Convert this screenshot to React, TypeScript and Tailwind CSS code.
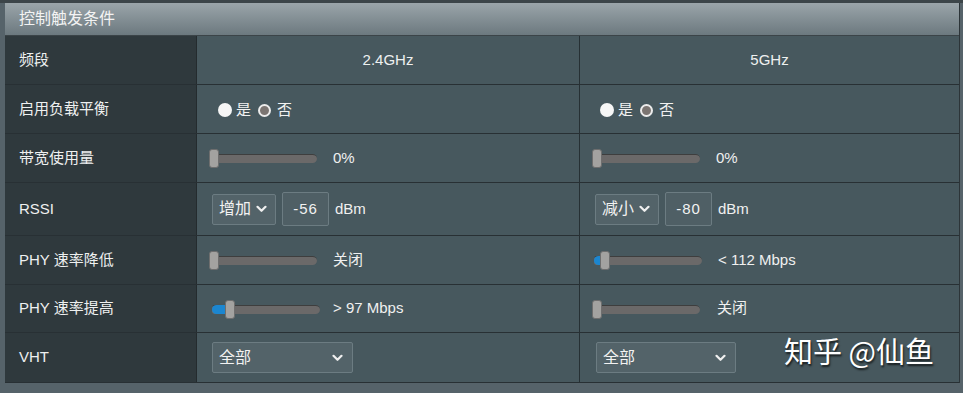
import React from "react";

const FONT = { fontFamily: '"Liberation Sans", Arial, "Noto Sans CJK SC", sans-serif' };

function RadioGroup() {
  return (
    <div className="flex items-center text-[15px] text-[#f2f2f2]">
      <span className="w-[14px] h-[14px] rounded-full bg-[#f6f6f6]" />
      <span className="ml-[4px] mr-[7px]">是</span>
      <span className="w-[13px] h-[13px] rounded-full bg-[#7b7572] border-[2px] border-[#ececec]" />
      <span className="ml-[6px]">否</span>
    </div>
  );
}

function Slider({ fill, thumbAt }: { fill: number; thumbAt: number }) {
  return (
    <div className="relative w-[108px] h-[20px]">
      <div className="absolute left-0 right-0 top-[6px] h-[9px] rounded-r-[5px] rounded-l-[3px] bg-[#6b6969] border-t border-[#3e3e3e]" />
      {fill > 0 && (
        <div
          className="absolute left-0 top-[6px] h-[9px] rounded-l-[5px] bg-[#1b86d0]"
          style={{ width: fill }}
        />
      )}
      <div
        className="absolute top-[1px] w-[10px] h-[19px] rounded-[3px] bg-[#a3a2a0] border border-[#6e6e6e]"
        style={{ left: thumbAt }}
      />
    </div>
  );
}

function Chevron() {
  return (
    <svg width="11" height="8" viewBox="0 0 11 8" className="shrink-0">
      <path d="M1.5 1.8 L5.5 5.8 L9.5 1.8" fill="none" stroke="#f0f0f0" strokeWidth="2.2" strokeLinecap="round" strokeLinejoin="round" />
    </svg>
  );
}

function SmallSelect({ label }: { label: string }) {
  return (
    <div className="flex items-center h-[31px] w-[64px] pl-[6px] pr-[8px] gap-[5px] bg-[#536369] border border-[#6c7c82] rounded-[2px] text-[16px] text-[#f2f2f2]">
      <span>{label}</span>
      <Chevron />
    </div>
  );
}

function NumInput({ value }: { value: string }) {
  return (
    <div className="flex items-center justify-center h-[34px] w-[47px] bg-[#4f5f65] border border-[#6c7c82] rounded-[2px] text-[15px] text-[#f2f2f2] tracking-[1px]">
      {value}
    </div>
  );
}

function WideSelect({ w }: { w: string }) {
  return (
    <div className={`flex items-center justify-between h-[31px] ${w} pl-[6px] pr-[9px] bg-[#536369] border border-[#6c7c82] rounded-[2px] text-[16px] text-[#f2f2f2]`}>
      <span>全部</span>
      <Chevron />
    </div>
  );
}

type Row = { label: string; h: string; a: React.ReactNode; b: React.ReactNode };

export default function App() {
  const rows: Row[] = [
    {
      label: "频段",
      h: "h-[49px]",
      a: <div className="w-full text-center text-[15px] text-[#eef0f0]">2.4GHz</div>,
      b: <div className="w-full text-center text-[15px] text-[#eef0f0]">5GHz</div>,
    },
    {
      label: "启用负载平衡",
      h: "h-[49px]",
      a: <div className="pl-[21px] pt-[2px]"><RadioGroup /></div>,
      b: <div className="pl-[20px] pt-[2px]"><RadioGroup /></div>,
    },
    {
      label: "带宽使用量",
      h: "h-[49px]",
      a: (
        <div className="flex items-center pl-[12px] text-[15px] text-[#f0f0f0]">
          <Slider fill={0} thumbAt={0} />
          <span className="ml-[16px]">0%</span>
        </div>
      ),
      b: (
        <div className="flex items-center pl-[12px] text-[15px] text-[#f0f0f0]">
          <Slider fill={0} thumbAt={0} />
          <span className="ml-[16px]">0%</span>
        </div>
      ),
    },
    {
      label: "RSSI",
      h: "h-[53px]",
      a: (
        <div className="flex items-center pl-[15px] text-[15px] text-[#f0f0f0]">
          <SmallSelect label="增加" />
          <div className="ml-[6px]"><NumInput value="-56" /></div>
          <span className="ml-[6px]">dBm</span>
        </div>
      ),
      b: (
        <div className="flex items-center pl-[15px] text-[15px] text-[#f0f0f0]">
          <SmallSelect label="减小" />
          <div className="ml-[6px]"><NumInput value="-80" /></div>
          <span className="ml-[6px]">dBm</span>
        </div>
      ),
    },
    {
      label: "PHY 速率降低",
      h: "h-[49px]",
      a: (
        <div className="flex items-center pl-[12px] text-[15px] text-[#f0f0f0]">
          <Slider fill={0} thumbAt={0} />
          <span className="ml-[16px]">关闭</span>
        </div>
      ),
      b: (
        <div className="flex items-center pl-[14px] text-[15px] text-[#f0f0f0]">
          <Slider fill={8} thumbAt={6} />
          <span className="ml-[16px]">&lt; 112 Mbps</span>
        </div>
      ),
    },
    {
      label: "PHY 速率提高",
      h: "h-[48px]",
      a: (
        <div className="flex items-center pl-[15px] text-[15px] text-[#f0f0f0]">
          <Slider fill={16} thumbAt={13} />
          <span className="ml-[13px]">&gt; 97 Mbps</span>
        </div>
      ),
      b: (
        <div className="flex items-center pl-[12px] text-[15px] text-[#f0f0f0]">
          <Slider fill={0} thumbAt={0} />
          <span className="ml-[17px]">关闭</span>
        </div>
      ),
    },
    {
      label: "VHT",
      h: "h-[50px]",
      a: (
        <div className="pl-[15px]">
          <WideSelect w="w-[141px]" />
        </div>
      ),
      b: (
        <div className="pl-[16px]">
          <WideSelect w="w-[140px]" />
        </div>
      ),
    },
  ];

  return (
    <div className="w-[963px] h-[393px] bg-[#56636a] overflow-hidden" style={FONT}>
      <div className="h-[3px] bg-[#3c4549]" />
      <div className="relative ml-[5px] mr-[3px] border-r border-[#2c3438]">
        <div className="h-[33px] flex items-center pl-[14px] text-[16px] text-[#f3f3f3] bg-gradient-to-b from-[#9ba5aa] to-[#6c797f] border-b border-[#3b4448]">
          控制触发条件
        </div>
        {rows.map((r, i) => (
          <div
            key={i}
            className={`grid grid-cols-[192px_383px_1fr] ${r.h} border-b border-[#283034]`}
          >
            <div className="flex items-center pl-[14px] bg-[#2f393d] text-[15px] text-[#eef0f0] border-r border-[#242b2e]">
              {r.label}
            </div>
            <div className="flex items-center bg-[#47585e] border-r border-[#263034]">{r.a}</div>
            <div className="flex items-center bg-[#47585e]">{r.b}</div>
          </div>
        ))}
        <div
          className="absolute left-[779px] top-[333px] text-[29px] leading-none text-white"
          style={{ fontFamily: '"Noto Sans CJK SC", sans-serif', textShadow: "1px 2px 2px rgba(0,0,0,0.7)" }}
        >
          知乎 @仙鱼
        </div>
      </div>
    </div>
  );
}
